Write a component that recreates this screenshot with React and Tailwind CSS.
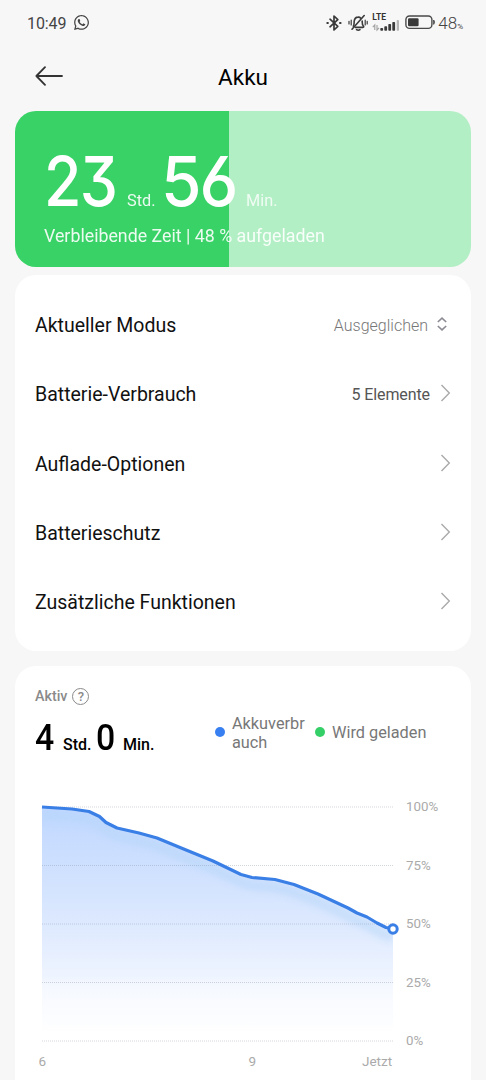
import { FaWhatsapp } from 'react-icons/fa';

const menuItems = [
  { label: 'Aktueller Modus', value: 'Ausgeglichen', picker: true },
  { label: 'Batterie-Verbrauch', value: '5 Elemente' },
  { label: 'Auflade-Optionen' },
  { label: 'Batterieschutz' },
  { label: 'Zusätzliche Funktionen' },
];

const levels = ['100%', '75%', '50%', '25%', '0%'];

// x = px from the start of the axis, y = px below the 100% line
const usage = [
  [0, 0], [30, 2], [47, 4.5], [57.5, 9.5], [64, 15.5], [75, 21], [97, 26], [115, 31], [138, 40.5],
  [171, 54], [199, 67.5], [210, 70.5], [233, 72.5], [252, 77.5], [276, 87], [306, 101], [315, 106],
  [325, 110], [335, 116], [344, 120.5], [351, 122],
];
const line = 'M' + usage.map(([x, y]) => `${x} ${y}`).join(' L');
const area = `${line} V234 H0 Z`;

const BluetoothIcon = () => (
  <svg width="16" height="18" viewBox="0 0 16 18" fill="none" stroke="#3a3a3a" strokeWidth="1.7" strokeLinejoin="round" strokeLinecap="round">
    <path d="M4 5.2 L11.8 12.3 L8 16 V2 L11.8 5.7 L4 12.8" />
    <path d="M1.3 9 h.6 M14 9 h.6" strokeWidth="2" />
  </svg>
);

const MutedBellIcon = () => (
  <svg width="20" height="18" viewBox="0 0 20 18" fill="none" stroke="#3a3a3a" strokeWidth="1.6" strokeLinejoin="round" strokeLinecap="round">
    <path d="M5.3 12.2 C6.4 10.8 6 8.8 6.2 7.2 C6.5 4.7 8 3.2 10 3.1 C11.2 3 12.2 3.5 12.8 4.2" />
    <path d="M14.2 7 C14.2 9.2 14 10.8 15.4 12 Q16.3 13.2 14.8 13.4 H7.4" />
    <path d="M8.5 15.6 Q10.3 16.8 12 15.6 M16.2 1.5 L4 15.2" />
    <path d="M3.2 6 v5 M1 7.3 v2.6 M17.2 6 v5 M19.2 7.3 v2.6" strokeWidth="1.2" />
  </svg>
);

const SignalBars = () => (
  <svg width="28" height="12" viewBox="0 0 28 12">
    <path d="M2.8 10 V5 L.8 7.2 M5 5 V10 L7 7.8" fill="none" stroke="#a0a0a0" strokeWidth="1.1" />
    <g fill="#3a3a3a">
      <rect x="8.3" y="8" width="2.8" height="2.8" rx=".8" />
      <rect x="12.3" y="6.2" width="2.8" height="4.6" rx=".8" />
      <rect x="16.3" y="4" width="2.8" height="6.8" rx=".8" />
      <rect x="20.3" y="2" width="2.8" height="8.8" rx=".8" />
    </g>
    <rect x="24.7" y="0" width="2.3" height="10.8" rx=".8" fill="#b5b5b5" />
  </svg>
);

const BatteryIcon = () => (
  <svg width="31" height="15" viewBox="0 0 31 15">
    <rect x=".9" y="1" width="26" height="12.4" rx="3.6" fill="none" stroke="#4a4a4a" strokeWidth="1.4" />
    <rect x="3" y="3.2" width="10.6" height="8" rx="1.2" fill="#3a3a3a" />
    <path d="M28.7 5 q1.6 2.2 0 4.4 z" fill="#3a3a3a" stroke="#3a3a3a" strokeWidth=".8" />
  </svg>
);

const Chevron = () => (
  <svg width="12" height="18" viewBox="0 0 12 18" fill="none" stroke="#aaaaaa" strokeWidth="1.4">
    <path d="M2.5 1 L10.3 9 L2.5 17" />
  </svg>
);

const UpDown = () => (
  <svg width="10" height="14" viewBox="0 0 10 14" fill="none" stroke="#8b8b93" strokeWidth="1.6">
    <path d="M.8 5 L5 1.2 L9.2 5 M.8 9 L5 12.8 L9.2 9" />
  </svg>
);

const StatusBar = () => (
  <div className="flex h-[46px] items-center justify-between pl-[27px] pr-[23px] text-[#444]">
    <div className="flex items-center gap-2">
      <span className="w-[38px] whitespace-nowrap pt-px text-[16px] tracking-[-0.1px]">10:49</span>
      <FaWhatsapp size={17} className="-mt-px" />
    </div>
    <div className="flex items-center">
      <BluetoothIcon />
      <div className="ml-1.5"><MutedBellIcon /></div>
      <div className="ml-1 mt-[-2px] w-[28px]">
        <div className="h-[7px] pt-px text-[8.5px] leading-[7px] font-bold text-[#333]">LTE</div>
        <SignalBars />
      </div>
      <div className="ml-[5px] mt-[-2px]"><BatteryIcon /></div>
      <div className="ml-[2px] flex items-baseline">
        <span className="text-[17px] leading-5 font-light">48</span>
        <span className="text-[8px]">%</span>
      </div>
    </div>
  </div>
);

const Header = () => (
  <div className="relative flex h-[64.5px] justify-center">
    <svg className="absolute left-[35px] top-[20px]" width="29" height="20" viewBox="0 0 29 20" fill="none" stroke="#333" strokeWidth="1.8" strokeLinecap="round" strokeLinejoin="round">
      <path d="M10 1.2 L1.4 10 L10 18.8 M1.4 10 H27" />
    </svg>
    <h1 className="pt-4 text-[22.5px] leading-[31px] text-black">Akku</h1>
  </div>
);

const digits = "inline-block origin-bottom-left font-['Inter'] text-[69px] font-medium leading-none tracking-[-2px] [font-feature-settings:'cv09','cv03','cv04']";

const RemainingCard = () => (
  <div className="h-[156.5px] overflow-hidden rounded-[21px] bg-[linear-gradient(to_right,#38d266_47%,#b3efc5_47%)] pl-[29px] pt-[36.5px] text-white">
    <div className="flex h-[73px] items-baseline">
      <div className="w-[83px] whitespace-nowrap"><span className={`${digits} scale-x-[0.88]`}>23</span></div>
      <div className="w-[34px] text-[16.3px] opacity-90">Std.</div>
      <div className="w-[85px] whitespace-nowrap"><span className={`${digits} scale-x-[0.95]`}>56</span></div>
      <div className="text-[16.3px] opacity-80">Min.</div>
    </div>
    <p className="whitespace-nowrap pt-1 text-[17.8px] leading-6 opacity-90">Verbleibende Zeit | 48 % aufgeladen</p>
  </div>
);

const MenuCard = () => (
  <div className="mt-2 h-[376px] rounded-[21px] bg-white pt-[15px]">
    {menuItems.map((item) => (
      <div key={item.label} className="flex h-[69.25px] items-center justify-between pl-5 pr-5">
        <span className="pt-[2px] text-[19.5px] text-[#111]">{item.label}</span>
        <div className="flex items-center">
          {item.picker ? (
            <>
              <span className="pt-[3px] text-[16px] font-light text-[#777]">{item.value}</span>
              <div className="ml-[9px] mr-1 mt-[-1px]"><UpDown /></div>
            </>
          ) : (
            <>
              <span className="pt-[3px] text-[16px] tracking-[-0.1px] text-[#555]">{item.value}</span>
              <div className="ml-[9px] mt-[-1px]"><Chevron /></div>
            </>
          )}
        </div>
      </div>
    ))}
  </div>
);

const BatteryChart = () => (
  <>
    <div className="flex pl-[27px]">
      <svg className="overflow-visible" width="351" height="254" viewBox="0 -10 351 254">
        <defs>
          <linearGradient id="fill" x1="0" y1="0" x2="0" y2="1">
            <stop offset="0" stopColor="#bfd7ff" />
            <stop offset=".5" stopColor="#dde9fe" />
            <stop offset=".72" stopColor="#eef4ff" />
            <stop offset=".78" stopColor="#f6f9ff" />
            <stop offset=".97" stopColor="#ffffff" />
          </linearGradient>
          <filter id="soft" x="-10%" y="-20%" width="120%" height="150%">
            <feGaussianBlur stdDeviation="3" />
          </filter>
          <clipPath id="area"><path d={area} /></clipPath>
        </defs>
        <path d={area} fill="url(#fill)" />
        <g clipPath="url(#area)">
          <path d={line} transform="translate(0 8)" fill="none" stroke="#b4d5f8" strokeWidth="9" opacity=".5" filter="url(#soft)" />
        </g>
        {levels.map((level, i) => (
          <line key={level} x1="0" x2="351" y1={i * 58.5} y2={i * 58.5} stroke="#8a97a8" strokeOpacity=".38" strokeWidth="1" strokeDasharray="1 1" />
        ))}
        <path d={line} fill="none" stroke="#3a7fe6" strokeWidth="3.2" strokeLinejoin="round" />
        <circle cx="351" cy="122" r="4.2" fill="#fff" stroke="#3a7fe6" strokeWidth="3" />
      </svg>
      <div className="flex h-[253px] flex-col justify-between pl-[13px] text-[13.3px] leading-[19px] text-[#aaa]">
        {levels.map((level) => <span key={level}>{level}</span>)}
      </div>
    </div>
    <div className="ml-[22px] flex text-[13.5px] leading-[20px] text-[#aaa]">
      <span className="w-[210px] pl-[1.5px]">6</span>
      <span className="w-[115px] pl-[1.5px]">9</span>
      <span>Jetzt</span>
    </div>
  </>
);

const UsageCard = () => (
  <div className="mt-[15px] h-[440px] rounded-t-[21px] bg-white">
    <div className="flex h-[131px]">
      <div className="w-[200px] pl-5 pt-5">
        <div className="flex items-center gap-[5px] text-[#8a8a8a]">
          <span className="text-[14.3px] font-medium leading-5">Aktiv</span>
          <span className="flex size-[17px] items-center justify-center rounded-full border-[1.3px] border-[#8a8a8a] text-[13px] font-medium leading-none">?</span>
        </div>
        <div className="mt-[10px] flex items-baseline whitespace-nowrap font-medium text-black">
          <span className="w-[28px]"><span className="inline-block origin-left scale-x-[0.94] text-[36px] leading-[44px]">4</span></span>
          <span className="w-[33px] text-[16px]">Std.</span>
          <span className="w-[27px]"><span className="inline-block origin-left scale-x-[0.94] text-[36px] leading-[44px]">0</span></span>
          <span className="text-[16px]">Min.</span>
        </div>
      </div>
      <div className="flex h-[131px] items-center text-[16.3px] leading-[19px] text-[#777]">
        <span className="size-[10px] rounded-full bg-[#3880f2]" />
        <span className="ml-[7px] w-[75px] pt-0.5">Akkuverbr<br />auch</span>
        <span className="ml-2 size-[10px] rounded-full bg-[#35cf68]" />
        <span className="ml-[7px] whitespace-nowrap pt-0.5">Wird geladen</span>
      </div>
    </div>
    <BatteryChart />
  </div>
);

const App = () => {
  return (
    <div className="h-[1080px] w-[486px] overflow-hidden bg-[#f7f7f7] font-['Roboto',sans-serif]">
      <StatusBar />
      <Header />
      <div className="pl-[15px] pr-[15px]">
        <RemainingCard />
        <MenuCard />
        <UsageCard />
      </div>
    </div>
  );
};

export default App;
